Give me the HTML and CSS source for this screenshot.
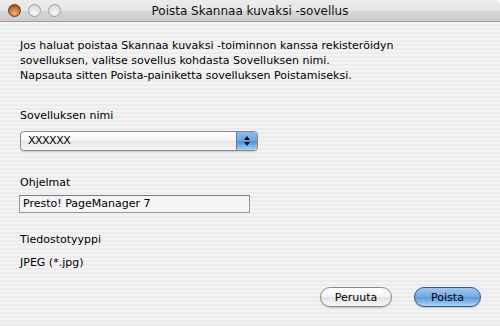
FILE: index.html
```html
<!DOCTYPE html>
<html lang="fi">
<head>
    <meta charset="UTF-8">
    <title>Poista Skannaa kuvaksi -sovellus</title>
    <link rel="stylesheet" href="styles.css">
</head>
<body>
    <div class="window">
        <div class="titlebar">
            <div class="lights">
                <span class="light close"></span>
                <span class="light"></span>
                <span class="light"></span>
            </div>
            <div class="title">Poista Skannaa kuvaksi -sovellus</div>
        </div>

        <div class="content">
            <p class="intro">Jos haluat poistaa Skannaa kuvaksi -toiminnon kanssa rekisteröidyn<br>
            sovelluksen, valitse sovellus kohdasta Sovelluksen nimi.<br>
            Napsauta sitten Poista-painiketta sovelluksen Poistamiseksi.</p>

            <div class="label first">Sovelluksen nimi</div>
            <div class="popup">
                <span class="popup-text">XXXXXX</span>
                <span class="popup-arrows">
                    <svg width="8" height="12" viewBox="0 0 8 12">
                        <path d="M4 1 L7 5 L1 5 Z" fill="#111"/>
                        <path d="M4 11 L7 7 L1 7 Z" fill="#111"/>
                    </svg>
                </span>
            </div>

            <div class="label second">Ohjelmat</div>
            <div class="textfield">Presto! PageManager 7</div>

            <div class="label third">Tiedostotyyppi</div>
            <div class="value">JPEG (*.jpg)</div>

            <div class="buttons">
                <button class="btn">Peruuta</button>
                <button class="btn default">Poista</button>
            </div>
        </div>
    </div>
</body>
</html>
```

FILE: styles.css
```css
body {
    margin: 0;
    padding: 0;
    font-family: 'DejaVu Sans', 'Noto Sans', sans-serif;
    font-size: 11px;
    color: #000;
}

.window {
    width: 500px;
    height: 326px;
    overflow: hidden;
    border-top-right-radius: 5px;
    background: repeating-linear-gradient(#ececec 0 2px, #f3f3f3 2px 4px);
}

.titlebar {
    height: 21px;
    display: flex;
    align-items: center;
    position: relative;
    background: linear-gradient(#ececec 0%, #e6e6e6 50%, #d6d6d6 52%, #cdcdcd 100%);
    border-bottom: 1px solid #9c9c9c;
    border-top-right-radius: 5px;
}

.lights {
    display: flex;
    gap: 7px;
    padding-left: 8px;
}

.light {
    width: 11px;
    height: 11px;
    border-radius: 50%;
    border: 1px solid #a2a2a2;
    background: radial-gradient(circle at 50% 70%, #fafafa 0%, #dcdcdc 70%, #c4c4c4 100%);
}

.light.close {
    border-color: #6e3b12;
    background: radial-gradient(circle at 50% 75%, #f1b37c 0%, #c1712f 55%, #7a3e10 100%);
}

.title {
    position: absolute;
    left: 0;
    right: 0;
    text-align: center;
    font-size: 12px;
    color: #111;
}

.content {
    padding: 16px 20px 0 20px;
}

.intro {
    margin: 0;
    line-height: 15px;
}

.label {
    line-height: 15px;
}

.label.first {
    margin-top: 25px;
}

.label.second {
    margin-top: 24px;
}

.label.third {
    margin-top: 19px;
}

.popup {
    margin-top: 8px;
    width: 236px;
    height: 18px;
    display: flex;
    border: 1px solid #8a8a8a;
    border-radius: 4px;
    overflow: hidden;
    background: linear-gradient(#ffffff 0%, #f4f4f4 50%, #e6e6e6 52%, #f6f6f6 100%);
    box-shadow: 0 1px 1px rgba(0, 0, 0, 0.15);
}

.popup-text {
    flex: 1;
    padding-left: 7px;
    line-height: 18px;
    letter-spacing: -0.5px;
}

.popup-arrows {
    width: 20px;
    display: flex;
    align-items: center;
    justify-content: center;
    border-left: 1px solid #5c7fa8;
    background: linear-gradient(#8fbbe9 0%, #6ea5df 50%, #4d8ed9 52%, #a6d2f7 100%);
}

.textfield {
    margin-top: 5px;
    width: 226px;
    height: 16px;
    line-height: 16px;
    padding-left: 3px;
    margin-left: -1px;
    border: 1px solid #999;
    border-top-color: #7a7a7a;
    background: #f4f4f4;
}

.value {
    margin-top: 8px;
    line-height: 15px;
}

.buttons {
    display: flex;
    justify-content: flex-end;
    gap: 22px;
    margin-top: 17px;
    padding-right: 0px;
    margin-right: -1px;
}

.btn {
    height: 20px;
    padding: 0;
    border-radius: 10px;
    font-family: 'DejaVu Sans', 'Noto Sans', sans-serif;
    font-size: 11px;
    color: #000;
    border: 1px solid #8a8a8a;
    background: linear-gradient(#ffffff 0%, #f2f2f2 50%, #e2e2e2 52%, #f8f8f8 100%);
    box-shadow: 0 1px 1px rgba(0, 0, 0, 0.2);
    width: 72px;
}

.btn.default {
    width: 67px;
    border-color: #2e5a8e;
    background: linear-gradient(#a3c8ef 0%, #74a9e2 50%, #5a98dc 52%, #a9d6f8 100%);
}
```
